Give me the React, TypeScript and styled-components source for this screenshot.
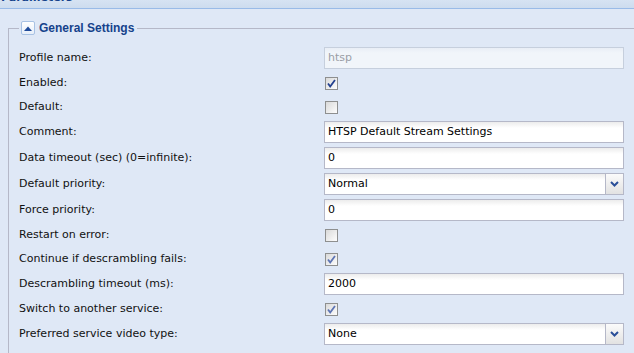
import React from "react";
import styled, { createGlobalStyle } from "styled-components";

const Global = createGlobalStyle`
  html, body { margin: 0; padding: 0; }
  body {
    background: #dfe8f6;
    overflow: hidden;
    font-family: "DejaVu Sans", Tahoma, sans-serif;
    font-size: 11px;
    color: #000;
  }
`;

const Page = styled.div`
  width: 634px;
  height: 353px;
  overflow: hidden;
  background: #dfe8f6;
`;

const Header = styled.div`
  height: 8px;
  overflow: hidden;
  background: linear-gradient(#d6e3f3, #cddcef);
  border-bottom: 1px solid #99bbe8;
`;

const HeaderTitle = styled.div`
  margin-top: -9px;
  padding-left: 1px;
  font-family: "DejaVu Sans", Tahoma, sans-serif;
  font-weight: bold;
  font-size: 11px;
  line-height: 14px;
  color: #15428b;
`;

const Body = styled.div`
  padding-top: 12px;
`;

const FieldSet = styled.fieldset`
  margin: 0 -40px 0 8px;
  padding: 12px 10px 40px 10px;
  border: 1px solid #b5b8c8;
  min-width: 0;
`;

const Legend = styled.legend`
  display: flex;
  align-items: center;
  gap: 4px;
  padding: 0 3px 0 2px;
  height: 14px;
`;

const Toggle = styled.span`
  box-sizing: border-box;
  width: 14px;
  height: 14px;
  border: 1px solid #a8c2e4;
  border-radius: 2px;
  background: linear-gradient(#ffffff, #e6eef9);
  display: flex;
  align-items: center;
  justify-content: center;
`;

const LegendText = styled.span`
  font-family: "Liberation Sans", Arial, sans-serif;
  font-weight: bold;
  font-size: 12px;
  color: #15428b;
`;

const Row = styled.div<{ $h: number }>`
  display: flex;
  align-items: center;
  height: ${(p) => p.$h}px;
  margin-bottom: 4px;
`;

const Label = styled.label`
  width: 305px;
  flex: none;
  font-size: 11px;
  line-height: 14px;
  white-space: nowrap;
  color: #111;
`;

const TextBox = styled.div<{ $disabled?: boolean }>`
  box-sizing: border-box;
  width: 300px;
  height: 22px;
  border: 1px solid ${(p) => (p.$disabled ? "#c6cfdd" : "#b5b8c8")};
  background: ${(p) =>
    p.$disabled
      ? "linear-gradient(#e9eef6, #f1f5fa 5px)"
      : "linear-gradient(#ececec, #ffffff 6px)"};
  color: ${(p) => (p.$disabled ? "#9a9ea6" : "#000")};
  padding: 0 3px;
  font-size: 11px;
  line-height: 20px;
  white-space: nowrap;
  overflow: hidden;
`;

const Combo = styled.div`
  box-sizing: border-box;
  width: 300px;
  height: 22px;
  border: 1px solid #b5b8c8;
  background: linear-gradient(#ececec, #ffffff 6px);
  display: flex;
`;

const ComboText = styled.div`
  flex: 1;
  padding: 0 3px;
  font-size: 11px;
  line-height: 20px;
`;

const Trigger = styled.div`
  width: 17px;
  border-left: 1px solid #b5b8c8;
  background: linear-gradient(#fbfbfb, #e2e2e2);
  display: flex;
  align-items: center;
  justify-content: center;
`;

const CheckWrap = styled.span`
  align-self: flex-start;
  margin-top: 4px;
  margin-left: 1px;
  width: 13px;
  height: 13px;
  display: block;
`;

const TriangleUp = () => (
  <svg width="8" height="5" viewBox="0 0 8 5">
    <path d="M0 5 L4 0.5 L8 5 Z" fill="#1e4a9a" />
  </svg>
);

const Chevron = () => (
  <svg width="9" height="6" viewBox="0 0 9 6">
    <path d="M1 1 L4.5 4.5 L8 1" fill="none" stroke="#2b4f99" strokeWidth="2" />
  </svg>
);

const Checkbox = ({ checked, dim }: { checked?: boolean; dim?: boolean }) => (
  <CheckWrap>
    <svg width="13" height="13" viewBox="0 0 13 13">
      <defs>
        <linearGradient id="cbg" x1="0" y1="0" x2="1" y2="1">
          <stop offset="0" stopColor="#d8d8d8" />
          <stop offset="1" stopColor="#ffffff" />
        </linearGradient>
      </defs>
      <rect x="0.5" y="0.5" width="12" height="12" fill="url(#cbg)" stroke="#8e8f8f" />
      {checked && (
        <path
          d="M3 6.5 L5.2 9.5 L10 3"
          fill="none"
          stroke={dim ? "#5d74b4" : "#23408f"}
          strokeWidth="1.8"
        />
      )}
    </svg>
  </CheckWrap>
);

type Field =
  | { kind: "text"; label: string; value: string; disabled?: boolean }
  | { kind: "check"; label: string; checked?: boolean; dim?: boolean }
  | { kind: "combo"; label: string; value: string };

const fields: Field[] = [
  { kind: "text", label: "Profile name:", value: "htsp", disabled: true },
  { kind: "check", label: "Enabled:", checked: true },
  { kind: "check", label: "Default:" },
  { kind: "text", label: "Comment:", value: "HTSP Default Stream Settings" },
  { kind: "text", label: "Data timeout (sec) (0=infinite):", value: "0" },
  { kind: "combo", label: "Default priority:", value: "Normal" },
  { kind: "text", label: "Force priority:", value: "0" },
  { kind: "check", label: "Restart on error:" },
  { kind: "check", label: "Continue if descrambling fails:", checked: true, dim: true },
  { kind: "text", label: "Descrambling timeout (ms):", value: "2000" },
  { kind: "check", label: "Switch to another service:", checked: true, dim: true },
  { kind: "combo", label: "Preferred service video type:", value: "None" },
];

export default function App() {
  return (
    <Page>
      <Global />
      <Header>
        <HeaderTitle>Parameters</HeaderTitle>
      </Header>
      <Body>
        <FieldSet>
          <Legend>
            <Toggle>
              <TriangleUp />
            </Toggle>
            <LegendText>General Settings</LegendText>
          </Legend>
          {fields.map((f, i) => (
            <Row key={i} $h={f.kind === "check" ? 20 : 22}>
              <Label>{f.label}</Label>
              {f.kind === "text" && <TextBox $disabled={f.disabled}>{f.value}</TextBox>}
              {f.kind === "combo" && (
                <Combo>
                  <ComboText>{f.value}</ComboText>
                  <Trigger>
                    <Chevron />
                  </Trigger>
                </Combo>
              )}
              {f.kind === "check" && <Checkbox checked={f.checked} dim={f.dim} />}
            </Row>
          ))}
        </FieldSet>
      </Body>
    </Page>
  );
}
